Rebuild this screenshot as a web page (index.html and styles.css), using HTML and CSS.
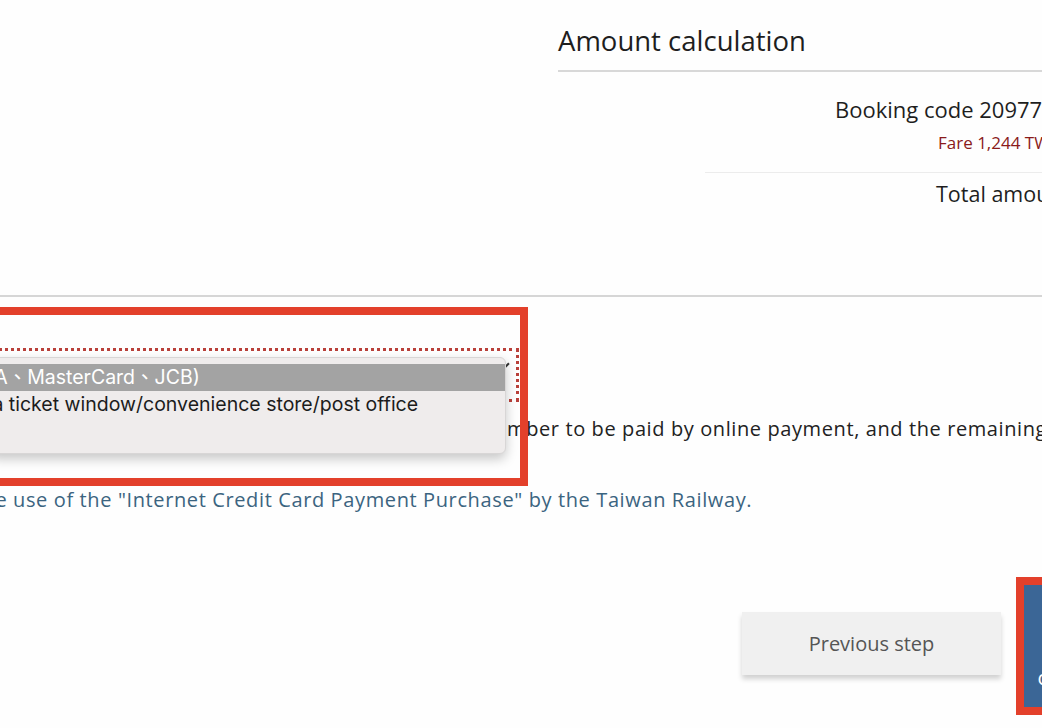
FILE: index.html
```html
<!DOCTYPE html>
<html lang="en">
<head>
<meta charset="utf-8">
<title>Amount calculation</title>
<link rel="stylesheet" href="styles.css">
</head>
<body>
<div class="page">
  <section class="summary">
    <div class="amount">
      <h2 class="amount-title">Amount calculation</h2>
      <div class="row booking">Booking code 2097713</div>
      <div class="row fare">Fare 1,244 TWD</div>
      <div class="sep"></div>
      <div class="row total">Total amount 1,244 TWD</div>
    </div>
  </section>

  <section class="payment">
    <div class="select">
      <span class="select-value">Credit card (VISA、MasterCard、JCB)</span>
      <span class="select-arrow"></span>
    </div>
    <p class="note">The total number to be paid by online payment, and the remaining amount will be refunded.</p>
    <p class="terms">I agree to the use of the "Internet Credit Card Payment Purchase" by the Taiwan Railway.</p>
    <div class="actions">
      <button class="btn btn-prev">Previous step</button>
      <button class="btn btn-next">Next step<br>confirm payment</button>
    </div>
  </section>

  <ul class="menu">
    <li class="opt opt-active">Credit card (VISA、MasterCard、JCB)</li>
    <li class="opt opt-2">Pay at a ticket window/convenience store/post office</li>
  </ul>

  <div class="mark mark-select"></div>
  <div class="mark mark-next"></div>
</div>
</body>
</html>
```

FILE: styles.css
```css
* { box-sizing: border-box; }
html, body {
  margin: 0;
  padding: 0;
  background: #fefefe;
}
body {
  width: 1042px;
  height: 728px;
  overflow: hidden;
  font-family: "Open Sans", "Liberation Sans", "Noto Sans CJK TC", sans-serif;
  color: #222;
}
.page {
  position: relative;
  width: 1042px;
  height: 728px;
  overflow: hidden;
}

/* ---------- summary ---------- */
.summary {
  height: 297px;
  border-bottom: 2px solid #d6d6d6;
}
.amount {
  margin-left: 558px;
  width: 600px;
}
.amount-title {
  margin: 0;
  font-weight: normal;
  font-size: 27.5px;
  line-height: 28px;
  padding-top: 27px;
  height: 72px;
  border-bottom: 2px solid #d8d8d8;
  color: #1e1e1e;
  white-space: nowrap;
}
.row { white-space: nowrap; }
.booking {
  margin-top: 25px;
  padding-left: 277px;
  font-size: 22px;
  line-height: 24px;
  color: #1e1e1e;
}
.fare {
  margin-top: 12px;
  padding-left: 380px;
  font-size: 17px;
  line-height: 20px;
  color: #8a1a1a;
}
.sep {
  margin-top: 19px;
  margin-left: 147px;
  height: 1px;
  background: #ececec;
}
.total {
  margin-top: 9px;
  padding-left: 378px;
  font-size: 21.5px;
  line-height: 24px;
  color: #1e1e1e;
}

/* ---------- payment ---------- */
.select {
  margin-top: 51px;
  margin-left: -20px;
  width: 539px;
  height: 54px;
  border: 3px dotted #b9403a;
  border-left: none;
  display: flex;
  align-items: center;
  justify-content: space-between;
  padding: 0 6px 0 10px;
  font-family: Inter, "Noto Sans CJK TC", sans-serif;
  font-size: 19px;
  white-space: nowrap;
  overflow: hidden;
}
.select-arrow {
  width: 8px;
  height: 8px;
  border-right: 2px solid #333;
  border-bottom: 2px solid #333;
  transform: rotate(45deg);
  margin-top: -22px;
  margin-right: 2px;
  flex: none;
}
.note {
  margin: 15px 0 0;
  font-size: 20px;
  line-height: 24px;
  letter-spacing: 0.6px;
  text-indent: 388px;
  white-space: nowrap;
  color: #222;
}
.terms {
  margin: 47px 0 0;
  font-size: 20px;
  line-height: 24px;
  letter-spacing: 0.62px;
  white-space: nowrap;
  color: #3b6480;
  text-indent: -125px;
}
.actions {
  margin-top: 73px;
  margin-left: 742px;
  display: flex;
  align-items: flex-start;
  gap: 23px;
}
.btn {
  font-family: "Open Sans", "Liberation Sans", sans-serif;
  border: none;
  flex: none;
  cursor: pointer;
}
.btn-prev {
  margin-top: 27px;
  width: 259px;
  height: 63px;
  background: #f0f0f0;
  color: #555;
  font-size: 20px;
  box-shadow: 0 4px 5px rgba(0, 0, 0, 0.18);
}
.btn-next {
  width: 187px;
  height: 122px;
  background: #3b6696;
  color: #fff;
  font-size: 20px;
  line-height: 34px;
  padding: 30px 0 0;
  text-align: center;
  white-space: nowrap;
}

/* ---------- open dropdown menu ---------- */
.menu {
  position: absolute;
  left: -10px;
  top: 357px;
  width: 516px;
  height: 97px;
  margin: 0;
  padding: 6px 0 0;
  list-style: none;
  background: #efecec;
  border: 1px solid #d8d6d6;
  border-radius: 6px;
  box-shadow: 0 5px 12px rgba(0, 0, 0, 0.22);
  overflow: hidden;
  font-family: Inter, "Noto Sans CJK TC", sans-serif;
  font-size: 19.5px;
}
.opt {
  height: 27px;
  line-height: 27px;
  white-space: nowrap;
  color: #1c1c1c;
}
.opt-active {
  background: #a3a3a3;
  color: #fff;
  text-indent: -143px;
}
.opt-2 {
  text-indent: -61px;
}

/* ---------- annotation boxes ---------- */
.mark {
  position: absolute;
  border: 8px solid #e3402b;
}
.mark-select {
  left: -20px;
  top: 307px;
  width: 548px;
  height: 179px;
}
.mark-next {
  left: 1016px;
  top: 577px;
  width: 60px;
  height: 138px;
}
```
